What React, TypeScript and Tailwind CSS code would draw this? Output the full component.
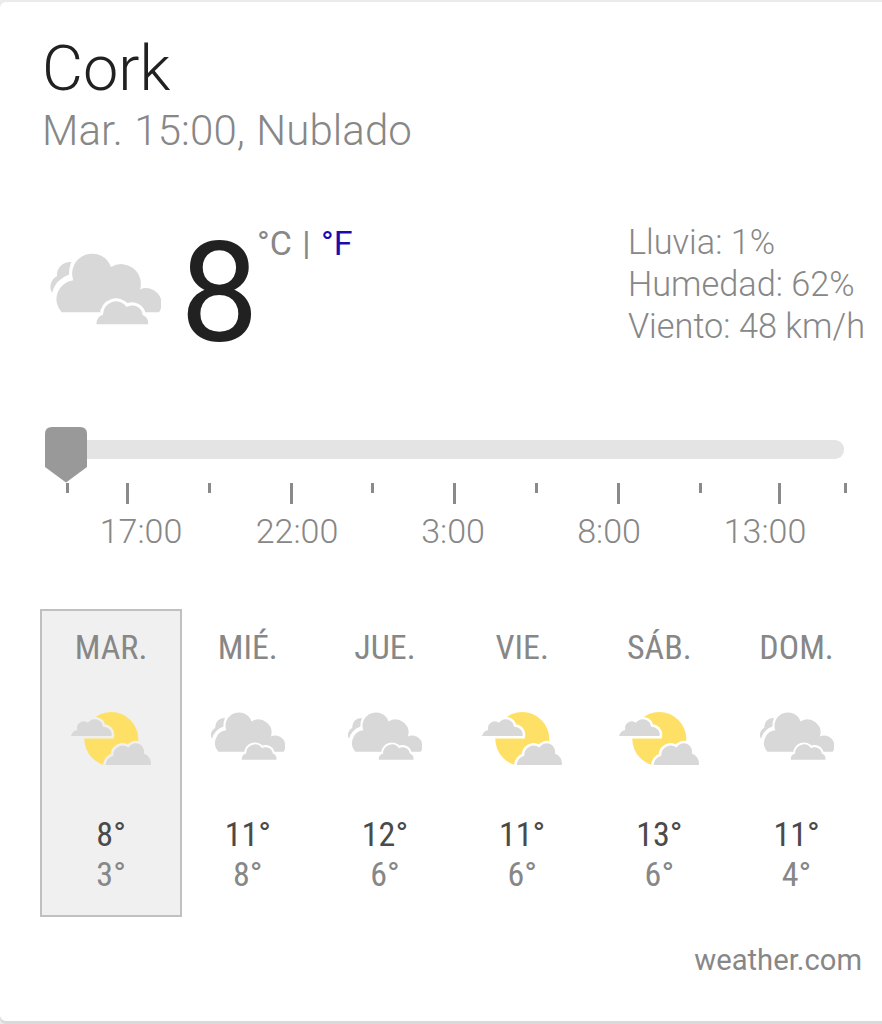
const days = [
  { name: "MAR.", icon: "partly", high: "8°", low: "3°", active: true },
  { name: "MIÉ.", icon: "cloudy", high: "11°", low: "8°", active: false },
  { name: "JUE.", icon: "cloudy", high: "12°", low: "6°", active: false },
  { name: "VIE.", icon: "partly", high: "11°", low: "6°", active: false },
  { name: "SÁB.", icon: "partly", high: "13°", low: "6°", active: false },
  { name: "DOM.", icon: "cloudy", high: "11°", low: "4°", active: false },
];

const hours = ["17:00", "22:00", "3:00", "8:00", "13:00"];

function Cloudy({ className }: { className: string }) {
  return (
    <svg viewBox="0 0 112 73" className={className} fill="#d8d8d8">
      <path d="M3 40A12 12 0 0 1 8 23.3A13 13 0 0 1 22.3 9Q20 14 20 21.5A27 27 0 0 0 3 40Z" />
      <path d="M12.7 59.3A19 19 0 0 1 24.3 27.3A19 19 0 0 1 62 14A19.6 19.6 0 0 1 91 36.4A15.5 15.5 0 0 1 110 59.3Z" />
      <path
        d="M47.5 71.3A9 9 0 0 1 54 61.7A13 13 0 0 1 77.7 54A10.5 10.5 0 0 1 93.7 62A8.5 8.5 0 0 1 99.2 71.3Z"
        stroke="#fff"
        strokeWidth="6"
        paintOrder="stroke"
      />
    </svg>
  );
}

function PartlyCloudy({ className, gap }: { className: string; gap: string }) {
  return (
    <svg viewBox="0 0 80 54" className={className} fill="#d8d8d8">
      <circle cx="40.3" cy="27" r="27" fill="#ffe066" />
      <g stroke={gap} strokeWidth="5" paintOrder="stroke">
        <path d="M0 24A8 8 0 0 1 6.3 18A6.8 6.8 0 0 1 17 10.8A8.3 8.3 0 0 1 32 14.7A8 8 0 0 1 40.6 24Z" />
        <path d="M34.7 53A10 10 0 0 1 42.3 43.7A9.5 9.5 0 0 1 57.5 35.5A8.3 8.3 0 0 1 72.8 41.5A10 10 0 0 1 79.8 53Z" />
      </g>
    </svg>
  );
}

export default function App() {
  return (
    <div className="h-[1024px] w-[882px] overflow-hidden bg-[#ebebeb] pt-[2px] font-['Roboto',sans-serif] text-[#878787]">
      <main className="flex h-[1019px] flex-col rounded-l-[6px] bg-white shadow-[0_3px_0_#dadada]">
        <header className="h-[205px] pt-[29px] pl-[42px] font-light">
          <h1 className="h-[75px] text-[63px] leading-[76px] text-[#212121]">Cork</h1>
          <p className="text-[42px] leading-[50px] tracking-[0.1px] [word-spacing:1px]">Mar. 15:00, Nublado</p>
        </header>

        <section className="flex h-[218px] pl-[49px]">
          <Cloudy className="mt-[46px] h-[73px] w-[112px]" />
          <div className="ml-[19px] w-[77px] pt-[2px] text-[140px] leading-[168px] text-[#212121]">8</div>
          <div className="mt-[16px] text-[34px] leading-[40px] [word-spacing:2px] whitespace-pre">
            °C | <span className="text-[#1a0dab]">°F</span>
          </div>
          <dl className="mt-[14px] mr-[17px] ml-auto text-[34.3px] leading-[42px] font-light whitespace-nowrap">
            <div>Lluvia: 1%</div>
            <div>Humedad: 62%</div>
            <div>Viento: 48 km/h</div>
          </dl>
        </section>

        <section className="h-[184px]">
          <div className="flex h-[58px] items-start pt-[2px] pl-[45px]">
            <svg viewBox="0 0 42 56" className="h-[56px] w-[42px]" fill="#999">
              <path d="M0 7Q0 0 7 0H35Q42 0 42 7V40L21 55.5L0 40Z" />
            </svg>
            <div className="mt-[13px] h-[19px] w-[757px] rounded-r-[9px] bg-[#e4e4e4]" />
          </div>
          <div className="grid h-[28px] grid-cols-[60px_82px_82px_81px_82px_82px_82px_82px_79px_66px_3px] pl-[66px]">
            {Array.from({ length: 11 }, (_, i) => (
              <i key={i} className={i % 2 ? "h-[21px] w-[3px] bg-[#8a8a8a]" : "h-[10px] w-[3px] bg-[#8a8a8a]"} />
            ))}
          </div>
          <div className="grid grid-cols-5 pr-[39px] pl-[63px] text-center text-[34px] leading-[40px] font-light">
            {hours.map((h) => (
              <span key={h}>{h}</span>
            ))}
          </div>
        </section>

        <section className="grid h-[308px] grid-cols-[repeat(6,137.2px)] pl-[42px] font-['Roboto_Condensed','Roboto',sans-serif] text-[34px] leading-[40px]">
          {days.map((d) => (
            <div
              key={d.name}
              className={
                d.active
                  ? "-mr-[3px] -ml-[2px] flex h-[308px] flex-col items-center border-2 border-[#c0c0c0] bg-[#f0f0f0] pt-[16px]"
                  : "flex flex-col items-center pt-[18px]"
              }
            >
              <div>{d.name}</div>
              <div className="flex h-[147px] w-full justify-center pt-[45px]">
                {d.icon === "partly" ? (
                  <PartlyCloudy className="h-[54px] w-[80px]" gap={d.active ? "#f0f0f0" : "#fff"} />
                ) : (
                  <Cloudy className="h-[49px] w-[75px]" />
                )}
              </div>
              <div className="text-[#4a4a4a]">{d.high}</div>
              <div>{d.low}</div>
            </div>
          ))}
        </section>

        <footer className="pt-[25px] pr-[20px] text-right text-[29.2px] leading-[36px]">weather.com</footer>
      </main>
    </div>
  );
}
